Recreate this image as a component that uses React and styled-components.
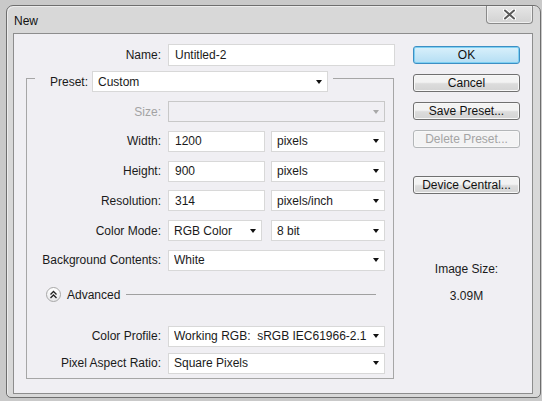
import React from 'react'
import styled, {createGlobalStyle} from 'styled-components'

const GlobalStyle = createGlobalStyle`
	html, body {
		margin: 0;
		background: #c9c9c9;
	}
	* {
		box-sizing: border-box;
	}
`

const Select = ({width, disabled, children}) => (
	<SelectBox $width={width} $disabled={disabled}>
		<SelectText>{children}</SelectText>
		<Arrow $disabled={disabled} />
	</SelectBox>
)

const Row = ({label, labelWidth = 134, disabled, children}) => (
	<FieldRow>
		<Label $width={labelWidth} $disabled={disabled}>{label}</Label>
		{children}
	</FieldRow>
)

const App = () => {
	return (
		<Page>
			<GlobalStyle />
			<Window>
				<TitleBar>
					<Title>New</Title>
					<CloseButton>
						<svg width="13" height="11" viewBox="0 0 13 11">
							<path d="M2 1.5 L11 9.5 M11 1.5 L2 9.5" stroke="#fff" strokeWidth="4.2" strokeLinecap="round" />
							<path d="M2 1.5 L11 9.5 M11 1.5 L2 9.5" stroke="#5a5a5a" strokeWidth="2" strokeLinecap="round" />
						</svg>
					</CloseButton>
				</TitleBar>
				<Client>
					<FormColumn>
						<Row label="Name:" labelWidth={147}>
							<TextBox $width={227} $height={22}>Untitled-2</TextBox>
						</Row>
						<GroupBox>
							<GroupLegend>
								<LegendLabel>Preset:</LegendLabel>
								<Select width={236}>Custom</Select>
							</GroupLegend>
							<Stack>
								<Row label="Size:" disabled>
									<Select width={217} disabled />
								</Row>
								<Row label="Width:">
									<TextBox $width={97}>1200</TextBox>
									<Select width={114}>pixels</Select>
								</Row>
								<Row label="Height:">
									<TextBox $width={97}>900</TextBox>
									<Select width={114}>pixels</Select>
								</Row>
								<Row label="Resolution:">
									<TextBox $width={97}>314</TextBox>
									<Select width={114}>pixels/inch</Select>
								</Row>
								<Row label="Color Mode:">
									<Select width={94}>RGB Color</Select>
									<Select width={114}>8 bit</Select>
								</Row>
								<Row label="Background Contents:">
									<Select width={217}>White</Select>
								</Row>
							</Stack>
							<AdvancedRow>
								<ToggleIcon>
									<svg width="9" height="9" viewBox="0 0 9 9">
										<path d="M1.5 4.5 L4.5 1.5 L7.5 4.5 M1.5 8 L4.5 5 L7.5 8" fill="none" stroke="#222" strokeWidth="1.3" />
									</svg>
								</ToggleIcon>
								<AdvancedText>Advanced</AdvancedText>
								<Rule />
							</AdvancedRow>
							<BottomStack>
								<Row label="Color Profile:">
									<Select width={217}>Working RGB:&nbsp; sRGB IEC61966-2.1</Select>
								</Row>
								<Row label="Pixel Aspect Ratio:">
									<Select width={217}>Square Pixels</Select>
								</Row>
							</BottomStack>
						</GroupBox>
					</FormColumn>
					<ButtonColumn>
						<DialogButton $primary>OK</DialogButton>
						<DialogButton>Cancel</DialogButton>
						<DialogButton>Save Preset...</DialogButton>
						<DialogButton $disabled>Delete Preset...</DialogButton>
						<DialogButton $spaced>Device Central...</DialogButton>
						<InfoText $top={68}>Image Size:</InfoText>
						<InfoText $top={12}>3.09M</InfoText>
					</ButtonColumn>
				</Client>
			</Window>
		</Page>
	)
}

const Page = styled.div`
	width: 542px;
	height: 401px;
	padding: 5px 1px 3px 6px;
	font-family: "Liberation Sans", Arial, sans-serif;
	font-size: 12px;
	color: #1a1a1a;
`

const Window = styled.div`
	height: 100%;
	display: flex;
	flex-direction: column;
	padding: 0 7px 3px 6px;
	border: 1px solid #6e6e6e;
	border-radius: 7px 7px 5px 5px;
	background: #d8d8d8;
	box-shadow: inset 1px 1px 0 #ececec;
`

const TitleBar = styled.div`
	height: 27px;
	display: flex;
	align-items: flex-start;
`

const Title = styled.div`
	margin: 8px 0 0 1px;
	font-size: 12px;
	line-height: 14px;
	color: #111;
`

const CloseButton = styled.div`
	margin-left: auto;
	width: 47px;
	height: 18px;
	display: flex;
	align-items: center;
	justify-content: center;
	border: 1px solid #8a8a8a;
	border-top: none;
	border-radius: 0 0 4px 4px;
	background: linear-gradient(#e6e6e6, #d2d2d2);
	box-shadow: inset 0 0 0 1px #efefef;
`

const Client = styled.div`
	flex: 1;
	display: flex;
	border: 1px solid #8d8d8d;
	background: #f0eff3;
`

const FormColumn = styled.div`
	width: 381px;
	padding-top: 10px;
	display: flex;
	flex-direction: column;
`

const FieldRow = styled.div`
	height: 21px;
	display: flex;
	align-items: center;
	gap: 6px;
`

const Label = styled.div`
	width: ${p => p.$width}px;
	margin-right: 1px;
	text-align: right;
	white-space: nowrap;
	color: ${p => p.$disabled ? '#a3a3a3' : '#1a1a1a'};
`

const TextBox = styled.div`
	width: ${p => p.$width}px;
	height: ${p => p.$height || 21}px;
	padding-left: 6px;
	display: flex;
	align-items: center;
	border: 1px solid #d8d8d8;
	background: #fff;
	white-space: nowrap;
`

const SelectBox = styled.div`
	width: ${p => p.$width}px;
	height: 21px;
	padding: 0 5px 0 5px;
	display: flex;
	align-items: center;
	border: 1px solid ${p => p.$disabled ? '#c8c8c8' : '#d8d8d8'};
	background: ${p => p.$disabled ? '#f0eff3' : '#fff'};
	& + & {
		margin-left: 3px;
	}
`

const SelectText = styled.div`
	flex: 1;
	white-space: nowrap;
	overflow: hidden;
`

const Arrow = styled.div`
	width: 0;
	height: 0;
	margin-left: 4px;
	border-left: 3.5px solid transparent;
	border-right: 3.5px solid transparent;
	border-top: 4px solid ${p => p.$disabled ? '#a8a8a8' : '#111'};
`

const GroupBox = styled.fieldset`
	width: 368px;
	margin: 0 0 0 12px;
	padding: 0 0 4px 0;
	border: 1px solid #a6a6a6;
	min-width: 0;
`

const GroupLegend = styled.legend`
	margin-left: 8px;
	padding: 6px 5px 0 1px;
	display: flex;
	align-items: center;
`

const LegendLabel = styled.div`
	width: 56px;
	padding-right: 4px;
	text-align: right;
`

const Stack = styled.div`
	margin-top: 9px;
	display: flex;
	flex-direction: column;
	gap: 8.8px;
`

const AdvancedRow = styled.div`
	height: 22px;
	margin: 13px 17px 20px 19px;
	display: flex;
	align-items: center;
`

const ToggleIcon = styled.div`
	width: 15px;
	height: 15px;
	display: flex;
	align-items: center;
	justify-content: center;
	border: 1px solid #a8a8a8;
	border-radius: 50%;
	background: linear-gradient(#ffffff, #e8e8ea);
`

const AdvancedText = styled.div`
	margin: 0 6px;
`

const Rule = styled.div`
	flex: 1;
	height: 1px;
	background: #a0a0a0;
`

const BottomStack = styled.div`
	display: flex;
	flex-direction: column;
	gap: 6px;
`

const ButtonColumn = styled.div`
	width: 107px;
	margin-left: 18px;
	padding-top: 12px;
	display: flex;
	flex-direction: column;
	gap: 10px;
`

const DialogButton = styled.div`
	height: 18px;
	display: flex;
	align-items: center;
	justify-content: center;
	border: 1px solid ${p => p.$primary ? '#3d8fc4' : p.$disabled ? '#b3b6b8' : '#707070'};
	border-radius: 3px;
	background: ${p => p.$primary
		? 'linear-gradient(#d9f0fb, #b4def4)'
		: p.$disabled ? '#f3f3f4' : 'linear-gradient(#f3f3f3 45%, #dcdcdc 55%, #d4d4d4)'};
	box-shadow: inset 0 0 0 1px ${p => p.$primary ? '#7fd0f2' : '#f8f8f8'};
	color: ${p => p.$disabled ? '#a4a4a4' : '#111'};
	margin-top: ${p => p.$spaced ? '18px' : '0'};
	white-space: nowrap;
`

const InfoText = styled.div`
	margin-top: ${p => p.$top - 10}px;
	line-height: 15px;
	text-align: center;
`

export default App
